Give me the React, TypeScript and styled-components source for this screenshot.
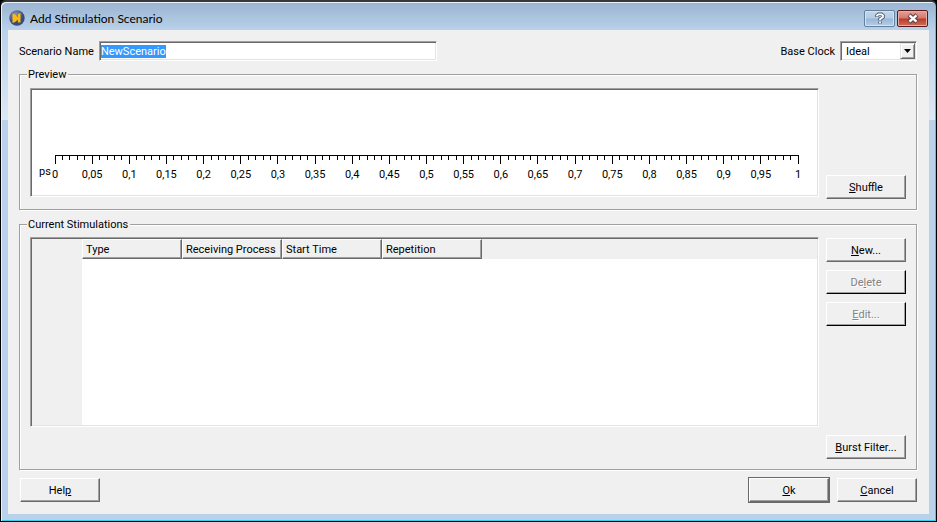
import React, { useEffect, useRef } from "react";
import styled, { createGlobalStyle, css } from "styled-components";

const FACE = "#f0f0f0";

const GlobalStyle = createGlobalStyle`
  * { box-sizing: border-box; }
  body { margin: 0; background: #000; font: 11px/14px Roboto, "Liberation Sans", sans-serif; color: #000; }
  button, input, select { font: inherit; color: inherit; margin: 0; }
`;

const sunken = css`
  border: 1px solid;
  border-color: #a0a0a0 #fff #fff #a0a0a0;
  box-shadow: inset 1px 1px 0 #696969, inset -1px -1px 0 #e3e3e3;
`;

const Window = styled.main`
  display: flex;
  flex-direction: column;
  min-height: 100vh;
  padding: 0 7px 7px;
  border: 1px solid #000;
  border-top: 2px solid #38383c;
  border-radius: 6px 6px 0 0;
  background: linear-gradient(#99b4d1, #b9d1ea 28px, #dce8f5 118px, #b9d1ea 118px);
  box-shadow: inset 1px 1px 0 #e8f2fb, inset -1px -1px 0 #35d0e8;
`;

const TitleBar = styled.header`
  display: flex;
  align-items: center;
  height: 28px;
  padding: 4px 1px 0;
`;

const Title = styled.h1`
  flex: 1;
  margin: 0 0 0 5px;
  padding-top: 2px;
  font: 12px/16px Lato, "Open Sans", sans-serif;
`;

const CaptionButton = styled.button<{ $danger?: boolean }>`
  display: grid;
  place-items: center;
  width: 31px;
  height: 17px;
  margin-left: 2px;
  padding: 0;
  border: 1px solid ${(p) => (p.$danger ? "#5a1a20" : "#64809f")};
  border-radius: 2px;
  background: ${(p) =>
    p.$danger
      ? "linear-gradient(#e3a196, #d5796c 48%, #b93a24 52%, #d0705a)"
      : "linear-gradient(#c2d6ec, #b5cce5 48%, #98b6d6 52%, #b4cee9)"};
  box-shadow: inset 0 0 0 1px ${(p) => (p.$danger ? "#e9aca4" : "#d3e3f3")};
`;

const Client = styled.form`
  flex: 1;
  display: flex;
  flex-direction: column;
  padding: 11px 12px 12px 11px;
  background: ${FACE};
`;

const TopRow = styled.div`
  display: flex;
  align-items: center;
  height: 20px;
`;

const FieldLabel = styled.label`
  flex: none;
  padding-top: 2px;
  margin-right: 5px;
`;

const NameInput = styled.input`
  ${sunken}
  width: 37.6%;
  height: 20px;
  padding: 2px 1px 1px;
  line-height: 15px;
  background: #fff;
  border-radius: 0;
  outline: none;
  &::selection { background: #3399ff; color: #fff; }
`;

const Spacer = styled.span`
  flex: 1;
`;

const Combo = styled.span`
  ${sunken}
  display: grid;
  grid-template-columns: 1fr 15px;
  width: 77px;
  height: 20px;
  padding: 1px;
  background: #fff;
`;

const ComboSelect = styled.select`
  grid-area: 1 / 1 / 2 / 3;
  appearance: none;
  border: 0;
  padding: 1px 16px 0 4px;
  background: transparent;
  outline: none;
`;

const ComboArrow = styled.span`
  grid-area: 1 / 2;
  display: grid;
  place-items: center;
  pointer-events: none;
  background: ${FACE};
  border: 1px solid;
  border-color: #e3e3e3 #696969 #696969 #e3e3e3;
  box-shadow: inset 1px 1px 0 #fff, inset -1px -1px 0 #a0a0a0;
`;

const Group = styled.section<{ $grow?: boolean }>`
  display: flex;
  flex-direction: column;
  flex: ${(p) => (p.$grow ? "1" : "none")};
  min-width: 0;
  margin: 7px 0 0;
`;

const GroupFrame = styled.div`
  flex: 1;
  display: flex;
  margin: -8px 0 1px;
  padding: 13px 10px 10px;
  border: 1px solid #a0a0a0;
  box-shadow: 1px 1px 0 #fff, inset 1px 1px 0 #fff;
`;

const Legend = styled.h2`
  position: relative;
  align-self: flex-start;
  margin: 0 0 0 8px;
  padding: 0 2px 0 1px;
  font: inherit;
  background: ${FACE};
`;

const Timeline = styled.div`
  ${sunken}
  flex: 1;
  min-width: 0;
  height: 109px;
  margin-bottom: 2px;
  padding: 66px 20px 0 24px;
  background: #fff;
`;

const Axis = styled.svg`
  display: block;
  width: 100%;
  height: 32px;
  overflow: visible;
  line { stroke: #000; stroke-width: 1px; shape-rendering: crispEdges; }
  text { fill: #000; text-anchor: middle; }
`;

const SideButtons = styled.div`
  display: flex;
  flex-direction: column;
  gap: 8px;
  margin-left: 7px;
`;

const PushButton = styled.button<{ $default?: boolean }>`
  width: 80px;
  height: 24px;
  padding: 1px 0 0;
  border: 1px solid;
  border-color: #fff #696969 #696969 #fff;
  border-radius: 0;
  background: ${FACE};
  box-shadow: inset -1px -1px 0 #a0a0a0${(p) => (p.$default ? ", 0 0 0 1px #696969" : "")};
  u { text-underline-offset: 1px; }
  &:disabled {
    color: #838383;
    text-shadow: 1px 1px 0 #fff;
    border-color: #fff #000 #000 #fff;
  }
`;

const GridPane = styled.div`
  ${sunken}
  flex: 1;
  min-width: 0;
  display: flex;
  padding: 1px;
  margin: -1px 0 32px;
  background: #fff;
`;

const RowGutter = styled.div`
  width: 50px;
  background: ${FACE};
`;

const HeaderStrip = styled.div`
  flex: 1;
  height: 20px;
  background: ${FACE};
`;

const Table = styled.table`
  table-layout: fixed;
  width: 400px;
  border-collapse: separate;
  border-spacing: 0;
`;

const ColumnHead = styled.th`
  height: 20px;
  padding: 2px 0 0 3px;
  font-weight: normal;
  text-align: left;
  white-space: nowrap;
  background: ${FACE};
  border: 1px solid;
  border-color: #fff #696969 #696969 #fff;
  box-shadow: inset -1px -1px 0 #a0a0a0;
`;

const Footer = styled.footer`
  display: flex;
  gap: 8px;
  padding: 7px 0 0 1px;
`;

const COLUMNS = ["Type", "Receiving Process", "Start Time", "Repetition"];

function AppIcon() {
  return (
    <svg width="16" height="16" viewBox="0 0 16 16" aria-hidden="true">
      <defs>
        <radialGradient id="orb" cx="40%" cy="30%">
          <stop offset="0" stopColor="#8b98b8" />
          <stop offset="1" stopColor="#384d7d" />
        </radialGradient>
      </defs>
      <circle cx="8" cy="8" r="7.7" fill="url(#orb)" />
      <path d="M3.5 3.5 L6 4.5 L9 7.5 V4 L11.5 3 V12.5 H9 V9.5 L6 12 L3.5 13 Z" fill="#fcb813" />
    </svg>
  );
}

function TimeAxis() {
  const ticks = Array.from({ length: 101 }, (_, i) => i);
  return (
    <Axis role="img" aria-label="Time axis in ps">
      <line x1="0" y1="0.5" x2="100%" y2="0.5" />
      {ticks.map((i) => (
        <line key={i} x1={`${i}%`} x2={`${i}%`} y1="0" y2={i % 5 ? 5 : 9} />
      ))}
      <text x="-10" y="20">ps</text>
      {ticks
        .filter((i) => i % 5 === 0)
        .map((i) => (
          <text key={i} x={`${i}%`} y="23">
            {String(i / 100).replace(".", ",")}
          </text>
        ))}
    </Axis>
  );
}

export default function App() {
  const nameRef = useRef<HTMLInputElement>(null);
  useEffect(() => {
    nameRef.current?.focus();
    nameRef.current?.select();
  }, []);

  return (
    <>
      <GlobalStyle />
      <Window>
        <TitleBar>
          <AppIcon />
          <Title>Add Stimulation Scenario</Title>
          <CaptionButton type="button" aria-label="Context help">
            <svg width="12" height="13" viewBox="0 0 12 13">
              <path d="M3 5 V3.5 L4.5 2.3 H7.5 L9 3.5 V5 L6 7.2 V8.4 M6 9.6 V11.4" fill="none" stroke="#4d5a6c" strokeWidth="3.6" />
              <path d="M3 4.6 V3.5 L4.5 2.3 H7.5 L9 3.5 V5 L6 7.2 V8.2 M6 9.6 V11.2" fill="none" stroke="#fff" strokeWidth="1.8" />
            </svg>
          </CaptionButton>
          <CaptionButton type="button" $danger aria-label="Close">
            <svg width="12" height="11" viewBox="0 0 12 11">
              <path d="M2 2 L10 9 M10 2 L2 9" stroke="#53454f" strokeWidth="4.4" />
              <path d="M2.5 2.4 L9.5 8.6 M9.5 2.4 L2.5 8.6" stroke="#fff" strokeWidth="2.4" />
            </svg>
          </CaptionButton>
        </TitleBar>

        <Client onSubmit={(e) => e.preventDefault()}>
          <TopRow>
            <FieldLabel htmlFor="name">Scenario Name</FieldLabel>
            <NameInput id="name" ref={nameRef} defaultValue="NewScenario" spellCheck={false} />
            <Spacer />
            <FieldLabel htmlFor="clock">Base Clock</FieldLabel>
            <Combo>
              <ComboSelect id="clock" defaultValue="Ideal">
                <option>Ideal</option>
              </ComboSelect>
              <ComboArrow>
                <svg width="7" height="4" viewBox="0 0 7 4">
                  <path d="M0 0 H7 L3.5 4 Z" />
                </svg>
              </ComboArrow>
            </Combo>
          </TopRow>

          <Group aria-labelledby="preview">
            <Legend id="preview">Preview</Legend>
            <GroupFrame>
              <Timeline>
                <TimeAxis />
              </Timeline>
              <SideButtons>
                <Spacer />
                <PushButton type="button"><u>S</u>huffle</PushButton>
              </SideButtons>
            </GroupFrame>
          </Group>

          <Group $grow aria-labelledby="stimulations">
            <Legend id="stimulations">Current Stimulations</Legend>
            <GroupFrame>
              <GridPane>
                <RowGutter />
                <div>
                  <Table>
                    <thead>
                      <tr>
                        {COLUMNS.map((name) => (
                          <ColumnHead key={name} scope="col">{name}</ColumnHead>
                        ))}
                      </tr>
                    </thead>
                  </Table>
                </div>
                <HeaderStrip />
              </GridPane>
              <SideButtons>
                <PushButton type="button"><u>N</u>ew...</PushButton>
                <PushButton type="button" disabled>De<u>l</u>ete</PushButton>
                <PushButton type="button" disabled><u>E</u>dit...</PushButton>
                <Spacer />
                <PushButton type="button"><u>B</u>urst Filter...</PushButton>
              </SideButtons>
            </GroupFrame>
          </Group>

          <Footer>
            <PushButton type="button">Hel<u>p</u></PushButton>
            <Spacer />
            <PushButton type="submit" $default><u>O</u>k</PushButton>
            <PushButton type="button"><u>C</u>ancel</PushButton>
          </Footer>
        </Client>
      </Window>
    </>
  );
}
